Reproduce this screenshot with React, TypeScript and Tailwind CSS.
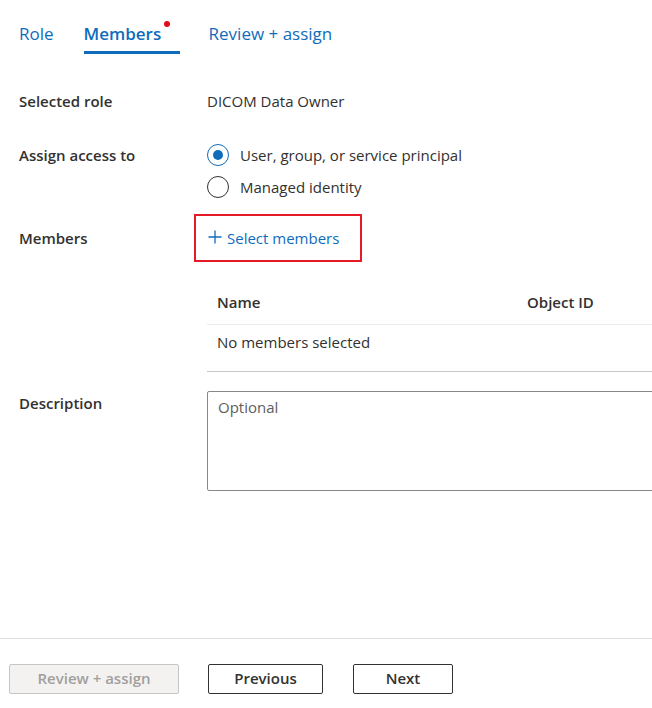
import React from "react";

const font = { fontFamily: '"Open Sans", "Noto Sans", sans-serif' };

export default function App() {
  return (
    <div className="w-[652px] h-[708px] bg-white flex flex-col overflow-hidden text-[#323130]" style={font}>
      {/* Tabs */}
      <div className="flex items-end pl-[19px] h-[54px] shrink-0">
        <div className="text-[17px] text-[#0f6cbd] h-[54px] flex items-end pb-[8px]">Role</div>
        <div className="ml-[30px] relative h-[54px] flex items-end pb-[5px] w-[96px] border-b-[3px] border-[#0f6cbd]">
          <span className="text-[17px] font-semibold text-[#0f6cbd]">Members</span>
          <span className="absolute left-[80px] top-[21px] w-[6px] h-[6px] rounded-full bg-[#e00b1c]" />
        </div>
        <div className="ml-[29px] text-[17px] text-[#0f6cbd] h-[54px] flex items-end pb-[8px]">Review + assign</div>
      </div>

      {/* Form */}
      <div className="flex flex-col pl-[19px] text-[15px]">
        <div className="flex items-center mt-[35px] h-[24px]">
          <div className="w-[188px] shrink-0 font-semibold">Selected role</div>
          <div>DICOM Data Owner</div>
        </div>

        <div className="flex mt-[30px]">
          <div className="w-[188px] shrink-0 font-semibold h-[24px] flex items-center">Assign access to</div>
          <div className="flex flex-col gap-[8px]">
            <div className="flex items-center h-[24px]">
              <span className="w-[22px] h-[22px] rounded-full border-[1.5px] border-[#0f6cbd] flex items-center justify-center">
                <span className="w-[10px] h-[10px] rounded-full bg-[#0f6cbd]" />
              </span>
              <span className="ml-[11px]">User, group, or service principal</span>
            </div>
            <div className="flex items-center h-[24px]">
              <span className="w-[22px] h-[22px] rounded-full border-[1.5px] border-[#323130]" />
              <span className="ml-[11px]">Managed identity</span>
            </div>
          </div>
        </div>

        <div className="flex items-center mt-[15px]">
          <div className="w-[175px] shrink-0 font-semibold">Members</div>
          <div className="w-[168px] h-[48px] border-2 border-[#e51a24] flex items-center pl-[12px] text-[#0f6cbd]">
            <svg width="14" height="14" viewBox="0 0 14 14" className="mr-[5px] -mt-[3px]">
              <path d="M7 0.5V13.5M0.5 7H13.5" stroke="#0f6cbd" strokeWidth="1.3" />
            </svg>
            <span>Select members</span>
          </div>
        </div>

        <div className="ml-[188px] mt-[19px] flex flex-col">
          <div className="flex items-center h-[44px] border-b border-[#edebe9] font-semibold">
            <div className="w-[320px] shrink-0 pl-[10px]">Name</div>
            <div>Object ID</div>
          </div>
          <div className="flex items-start h-[47px] border-b border-[#c8c6c4] pl-[10px] pt-[6px]">No members selected</div>
        </div>

        <div className="flex mt-[19px]">
          <div className="w-[188px] shrink-0 font-semibold pt-[1px]">Description</div>
          <div className="w-[470px] shrink-0 h-[100px] border border-[#8a8886] rounded-[2px] pl-[10px] pt-[4px] text-[#605e5c]">Optional</div>
        </div>
      </div>

      {/* Footer */}
      <div className="mt-auto border-t border-[#e1dfdd] h-[70px] flex items-start pt-[25px] pl-[9px] text-[15px] font-semibold">
        <div className="w-[170px] h-[30px] border border-[#c8c6c4] bg-[#f3f2f1] rounded-[2px] flex items-center justify-center pb-[2px] text-[#a19f9d]">Review + assign</div>
        <div className="ml-[29px] w-[115px] h-[30px] border border-[#323130] rounded-[2px] flex items-center justify-center pb-[2px]">Previous</div>
        <div className="ml-[30px] w-[100px] h-[30px] border border-[#323130] rounded-[2px] flex items-center justify-center pb-[2px]">Next</div>
      </div>
    </div>
  );
}
